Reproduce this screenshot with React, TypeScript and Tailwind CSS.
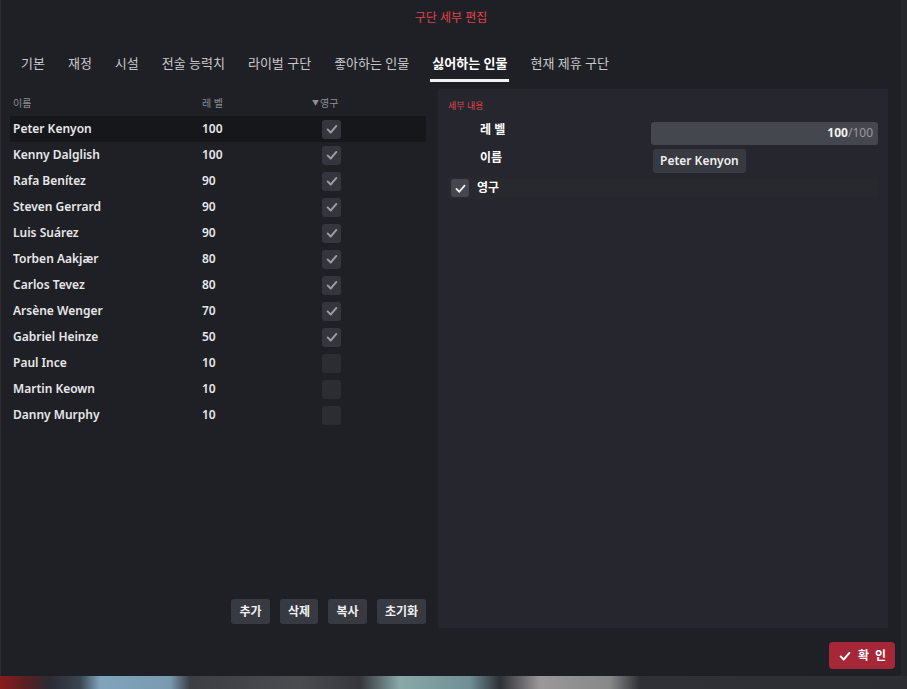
import React from "react";

const font = { fontFamily: '"Noto Sans", "Noto Sans CJK KR", sans-serif' };

const tabs = ["기본", "재정", "시설", "전술 능력치", "라이벌 구단", "좋아하는 인물", "싫어하는 인물", "현재 제휴 구단"];

const rows: [string, number, boolean][] = [
  ["Peter Kenyon", 100, true],
  ["Kenny Dalglish", 100, true],
  ["Rafa Benítez", 90, true],
  ["Steven Gerrard", 90, true],
  ["Luis Suárez", 90, true],
  ["Torben Aakjær", 80, true],
  ["Carlos Tevez", 80, true],
  ["Arsène Wenger", 70, true],
  ["Gabriel Heinze", 50, true],
  ["Paul Ince", 10, false],
  ["Martin Keown", 10, false],
  ["Danny Murphy", 10, false],
];

const buttons: [string, string][] = [
  ["추가", "w-[39px]"],
  ["삭제", "w-[38px]"],
  ["복사", "w-[39px]"],
  ["초기화", "w-[49px]"],
];

function Check({ color, size = 14 }: { color: string; size?: number }) {
  return (
    <svg width={size} height={size} viewBox="0 0 16 16" fill="none">
      <path d="M3 8.5 L6.5 12 L13 4.5" stroke={color} strokeWidth="2.2" strokeLinecap="round" strokeLinejoin="round" />
    </svg>
  );
}

export default function App() {
  return (
    <div className="w-[907px] h-[689px] overflow-hidden bg-[#2a2b30] flex flex-col" style={font}>
      <div className="flex h-[676px]">
        <div className="w-[901px] h-[676px] bg-[#1f2025] border-l border-[#2c2d33] rounded-br-[3px] flex flex-col">
          {/* title */}
          <div className="h-[34px] pt-[9px] text-center text-[12px] text-[#e0434b] leading-[18px]">구단 세부 편집</div>
          {/* tabs */}
          <div className="flex pl-[10px] mt-[20px] h-[35px] gap-[3px]">
            {tabs.map((t, i) => {
              const active = i === 6;
              return (
                <div key={t} className="flex flex-col px-[10px]">
                  <div
                    className={
                      "text-[13px] leading-[19px] whitespace-nowrap " +
                      (active ? "text-white font-bold" : "text-[#c9c9cc]")
                    }
                  >
                    {t}
                  </div>
                  <div className={"mt-[6px] h-[3px] -mx-[2px] " + (active ? "bg-[#f2f2f2]" : "")} />
                </div>
              );
            })}
          </div>
          {/* body */}
          <div className="flex h-[539px]">
            {/* left panel */}
            <div className="w-[437px] flex flex-col pl-[9px] pr-[12px] pb-[4px]">
              <div className="flex items-center h-[27px] text-[10px] text-[#8e8e95] pl-[3px] pt-[1px]">
                <div className="w-[189px]">이름</div>
                <div className="w-[110px]">레 벨</div>
                <div className="flex items-center">
                  <span className="text-[7px] mr-[1px]">▼</span>영구
                </div>
              </div>
              {rows.map(([name, lvl, chk], i) => (
                <div
                  key={name}
                  className={"flex items-center h-[26px] pl-[3px] " + (i === 0 ? "bg-[#16171b]" : "")}
                >
                  <div className="w-[189px] text-[12px] font-semibold text-[#e8e8ea]">{name}</div>
                  <div className="w-[120px] text-[12px] font-semibold text-[#e8e8ea]">{lvl}</div>
                  <div
                    className={
                      "w-[19px] h-[19px] rounded-[3px] flex items-center justify-center " +
                      (chk ? "bg-[#35363d]" : "bg-[#2c2d33]")
                    }
                  >
                    {chk && <Check color="#9c9ca3" size={14} />}
                  </div>
                </div>
              ))}
              <div className="mt-auto flex justify-end gap-[10px]">
                {buttons.map(([b, w]) => (
                  <div
                    key={b}
                    className={
                      "h-[25px] rounded-[3px] bg-[#383a42] text-[12px] font-bold text-[#f0f0f0] flex items-center justify-center " +
                      w
                    }
                  >
                    {b}
                  </div>
                ))}
              </div>
            </div>
            {/* right panel */}
            <div className="w-[450px] h-[539px] bg-[#26272e] pl-[10px] pr-[10px] pt-[10px]">
              <div className="text-[9px] text-[#e0434b] leading-[14px]">세부 내용</div>
              <div className="flex items-center h-[24px] mt-[8px]">
                <div className="w-[203px] pl-[32px] pb-[6px] text-[12px] font-bold text-white">레 벨</div>
                <div className="flex-1 h-[23px] rounded-[3px] bg-[#45474f] flex items-center justify-end pr-[5px] text-[12px] font-bold">
                  <span className="text-[#f2f2f2]">100</span>
                  <span className="text-[#9a9aa0] font-normal">/100</span>
                </div>
              </div>
              <div className="flex items-center h-[24px] mt-[4px]">
                <div className="w-[205px] pl-[32px] pb-[6px] text-[12px] font-bold text-white">이름</div>
                <div className="h-[24px] px-[7px] rounded-[3px] bg-[#383a42] flex items-center text-[12px] font-semibold text-[#f0f0f0]">
                  Peter Kenyon
                </div>
              </div>
              <div className="flex items-center h-[22px] mt-[4px] bg-[#28292f] pl-[3px]">
                <div className="w-[18px] h-[18px] rounded-[3px] bg-[#45474f] flex items-center justify-center">
                  <Check color="#f2f2f2" size={13} />
                </div>
                <div className="ml-[8px] text-[12px] font-bold text-white">영구</div>
              </div>
            </div>
          </div>
          {/* footer */}
          <div className="flex justify-end pr-[6px] pt-[14px]">
            <div className="h-[27px] w-[66px] rounded-[4px] bg-[#a52738] flex items-center justify-center gap-[6px] text-[12px] font-bold text-white">
              <Check color="#ffffff" size={14} />
              <span>확</span>
              <span>인</span>
            </div>
          </div>
        </div>
        <div className="flex-1 bg-[#26272c]" />
      </div>
      <div
        className="h-[13px]"
        style={{
          background:
            "linear-gradient(90deg, #8a1c1c 0px, #5a1f22 25px, #2a2c33 50px, #3a4450 80px, #7fa4bc 100px, #7a9ab0 170px, #3c3e44 190px, #4a4c50 300px, #35373c 360px, #8aa8a8 400px, #6f8f94 470px, #2e3036 500px, #9a9898 540px, #888 610px, #2f3136 640px, #2c2e33 907px)",
        }}
      />
    </div>
  );
}
